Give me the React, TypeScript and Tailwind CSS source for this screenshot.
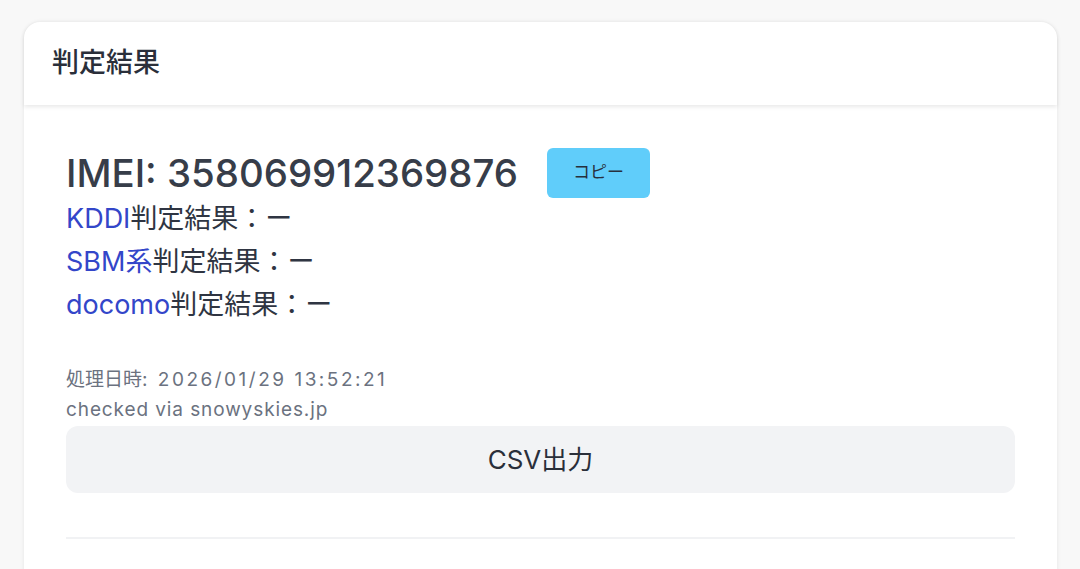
import React from "react";

const font = { fontFamily: 'Inter, "Noto Sans CJK JP", sans-serif' };

function ResultLine({ carrier }: { carrier: string }) {
  return (
    <p className="text-[27px] leading-[43px] text-[#2f3542]">
      <span className="text-[#3346c9]">{carrier}</span>判定結果：ー
    </p>
  );
}

export default function App() {
  return (
    <div className="min-h-[569px] w-[1080px] overflow-hidden bg-[#f8f8f8] pl-6 pt-[22px]" style={font}>
      <div className="h-[560px] w-[1033px] rounded-t-2xl bg-white shadow-[0_0_4px_rgba(0,0,0,0.08)]">
        <div className="flex h-[83px] items-center rounded-t-2xl px-7 shadow-[0_2px_4px_rgba(0,0,0,0.09)]">
          <h2 className="text-[27px] font-medium text-[#2a2f3a]">判定結果</h2>
        </div>

        <div className="px-[42px] pt-[42px]">
          <div className="flex items-center gap-[29px]">
            <h3 className="text-[38.4px] font-medium leading-[52px] text-[#373d49]">IMEI: 358069912369876</h3>
            <button className="h-[50px] w-[103px] rounded-md bg-[#60cdfa] text-[17px] text-[#27303d]">コピー</button>
          </div>

          <div className="mt-[-2px]">
            <ResultLine carrier="KDDI" />
            <ResultLine carrier="SBM系" />
            <ResultLine carrier="docomo" />
          </div>

          <div className="mt-[39px] text-[19px] leading-[30px] text-[#6b7280]">
            <p>
              処理日時<span className="tracking-[2.5px]">: 2026/01/29 13:52:21</span>
            </p>
            <p className="tracking-[0.9px]">checked via snowyskies.jp</p>
          </div>

          <button className="mt-[1px] h-[67px] w-full rounded-xl bg-[#f2f3f5] text-[26px] text-[#2a2f3a]">CSV出力</button>

          <div className="mt-[44px] h-[2px] w-full bg-[#f1f2f4]" />
        </div>
      </div>
    </div>
  );
}
